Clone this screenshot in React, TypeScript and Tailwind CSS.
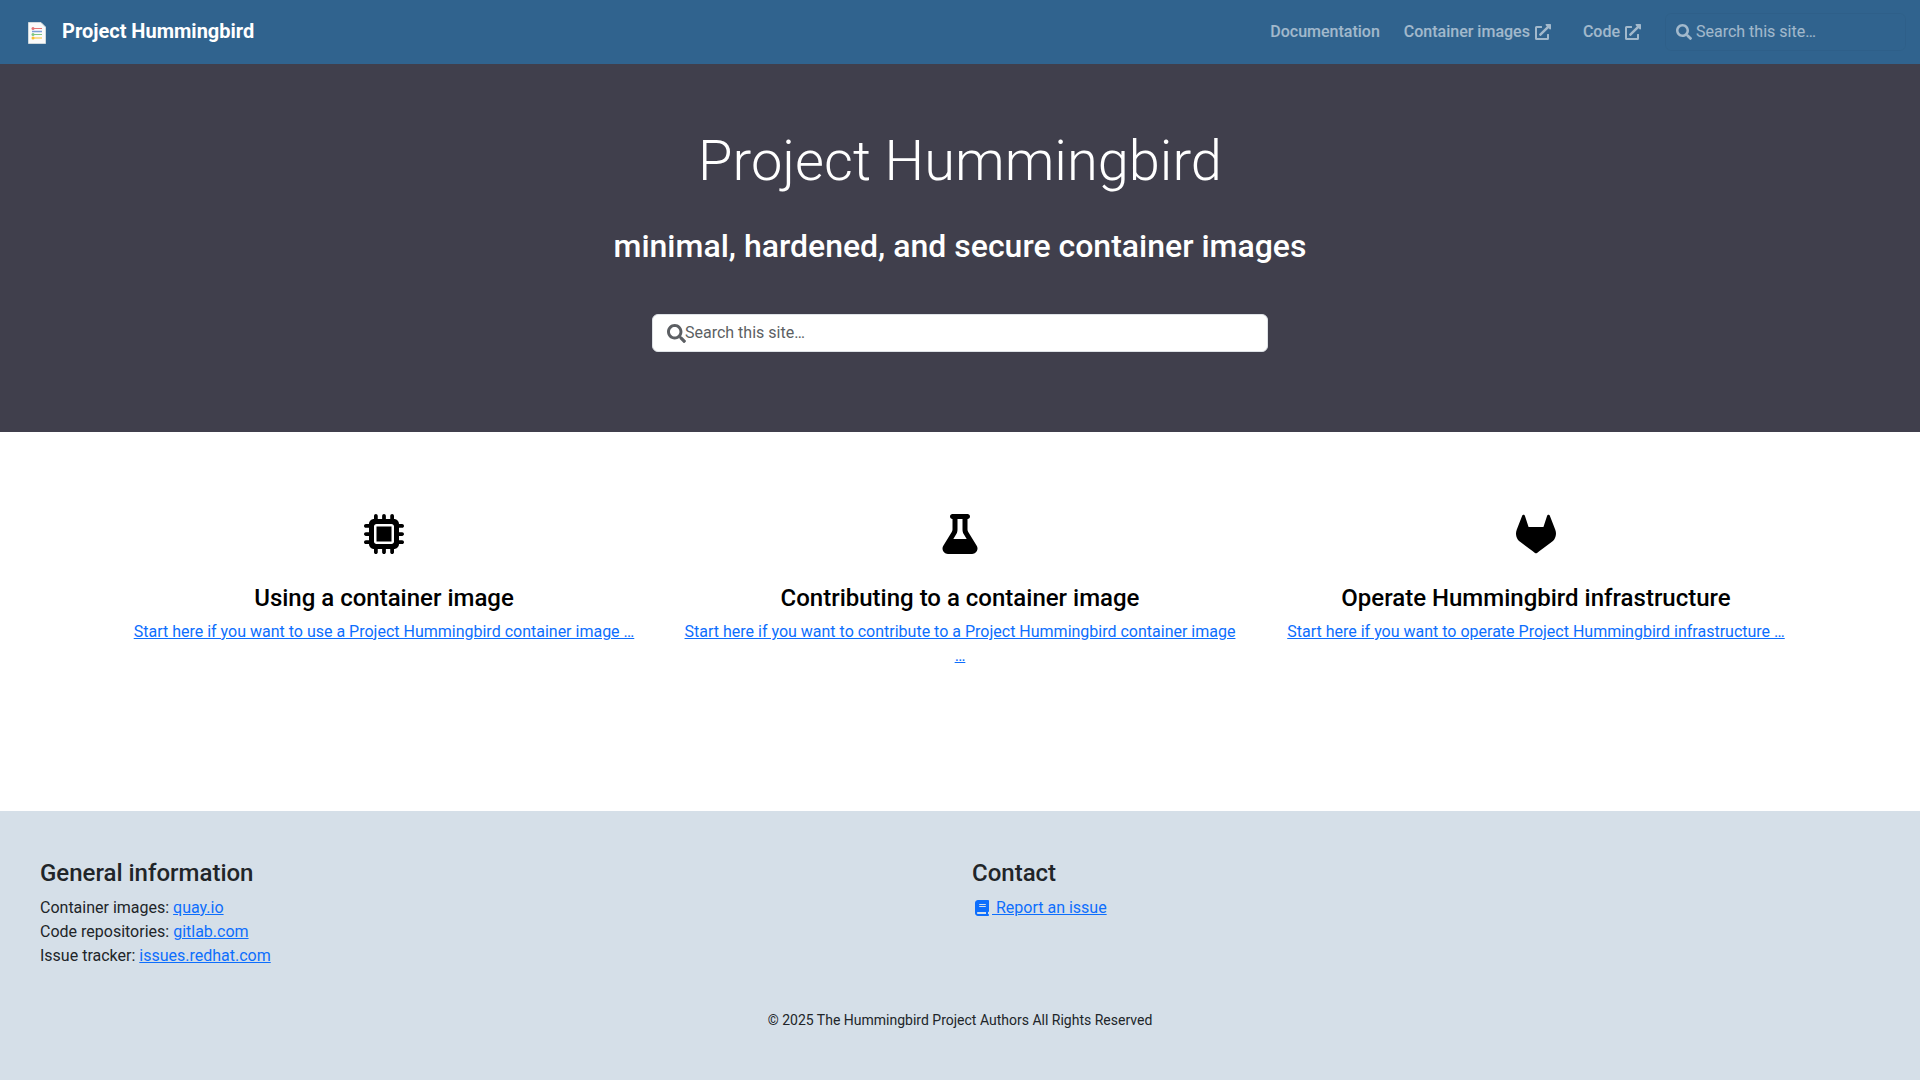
import { FaExternalLinkAlt, FaSearch } from 'react-icons/fa';
import { FaBook, FaFlask, FaGitlab, FaMicrochip } from 'react-icons/fa6';

const linkClass = 'text-[#0d6efd] underline';

const cards = [
  {
    icon: <FaMicrochip className="text-[40px]" />,
    title: 'Using a container image',
    text: 'Start here if you want to use a Project Hummingbird container image …',
  },
  {
    icon: <FaFlask className="text-[40px]" />,
    title: 'Contributing to a container image',
    text: 'Start here if you want to contribute to a Project Hummingbird container image …',
  },
  {
    icon: <FaGitlab className="text-[40px]" />,
    title: 'Operate Hummingbird infrastructure',
    text: 'Start here if you want to operate Project Hummingbird infrastructure …',
  },
];

const Logo = () => (
  <svg width="18" height="22" viewBox="0 0 18 22" className="mt-[4px] shrink-0">
    <path d="M0.5 0.5H13L17.5 5V21.5H0.5Z" fill="#fafafa" stroke="#cfd8dc" />
    <path d="M5 6.5H14" stroke="#e57373" strokeWidth="1" />
    <circle cx="5" cy="6.5" r="1.5" fill="#e57373" />
    <path d="M4 9.5H14" stroke="#7e9fd6" strokeWidth="1.5" />
    <path d="M5 12.5H14" stroke="#81c784" strokeWidth="1" />
    <circle cx="5" cy="12.5" r="1.5" fill="#81c784" />
    <path d="M5 16H14" stroke="#fbc02d" strokeWidth="1" />
    <circle cx="5" cy="16" r="1.5" fill="#fbc02d" />
  </svg>
);

const App = () => {
  return (
    <div className="min-h-screen bg-white font-['Roboto',sans-serif] text-[16px] leading-6 text-[#212529]">
      {/* Navbar */}
      <nav className="flex h-16 items-center bg-[#30638e] pb-[2px] pl-7 pr-[14px] text-white">
        <Logo />
        <span className="ml-[16px] text-[20px] font-bold">Project Hummingbird</span>
        <div className="mt-[2px] ml-auto flex items-center font-medium text-white/55">
          <span>Documentation</span>
          <span className="ml-6 flex items-center gap-[5px]">
            Container images <FaExternalLinkAlt className="text-[16px]" />
          </span>
          <span className="ml-[32px] flex items-center gap-[5px]">
            Code <FaExternalLinkAlt className="text-[16px]" />
          </span>
          <div className="ml-[24px] flex h-[38px] w-[241px] items-center gap-[4px] rounded-md border border-black/[0.03] px-[10px] font-normal">
            <FaSearch className="shrink-0 text-[16px]" />
            <span className="whitespace-nowrap">Search this site…</span>
          </div>
        </div>
      </nav>

      {/* Hero */}
      <section className="flex h-[368px] flex-col items-center bg-[#403f4c] pt-[64px] text-white">
        <h1 className="text-[56px] leading-[67px] font-light">Project Hummingbird</h1>
        <p className="mt-[32px] text-[32px] leading-[38px] font-medium">minimal, hardened, and secure container images</p>
        <div className="mt-[49px] flex h-[38px] w-[616px] items-center rounded-md border border-[#dee2e6] bg-white px-[14px] text-[#5c5f63]">
          <FaSearch className="-mr-px shrink-0 text-[19px]" />
          <span>Search this site…</span>
        </div>
      </section>

      {/* Cards */}
      <section className="grid h-[379px] grid-cols-3 px-24 pt-[81px]">
        {cards.map((card) => (
          <div key={card.title} className="flex flex-col items-center px-3 text-center">
            <div className="flex h-[42px] items-center text-black">{card.icon}</div>
            <h4 className="mt-[29px] text-[24px] leading-[29px] font-medium text-black">{card.title}</h4>
            <a href="#" className={`mt-[7px] ${linkClass}`}>{card.text}</a>
          </div>
        ))}
      </section>

      {/* Footer */}
      <footer className="h-[269px] bg-[#d5dfe8] pt-[48px]">
        <div className="grid grid-cols-2 pl-10 pr-4">
          <div>
            <h4 className="mb-2 text-[24px] leading-[29px] font-medium">General information</h4>
            <div>Container images: <a href="#" className={linkClass}>quay.io</a></div>
            <div>Code repositories: <a href="#" className={linkClass}>gitlab.com</a></div>
            <div>Issue tracker: <a href="#" className={linkClass}>issues.redhat.com</a></div>
          </div>
          <div>
            <h4 className="mb-2 text-[24px] leading-[29px] font-medium">Contact</h4>
            <div className="flex items-center text-[#0d6efd]">
              <span className="flex w-5 justify-center"><FaBook className="text-[16px]" /></span>
              <a href="#" className={`whitespace-pre ${linkClass}`}> Report an issue</a>
            </div>
          </div>
        </div>
        <p className="mt-[42px] text-center text-[14px] leading-[21px]">© 2025 The Hummingbird Project Authors All Rights Reserved</p>
      </footer>
    </div>
  );
};

export default App;
